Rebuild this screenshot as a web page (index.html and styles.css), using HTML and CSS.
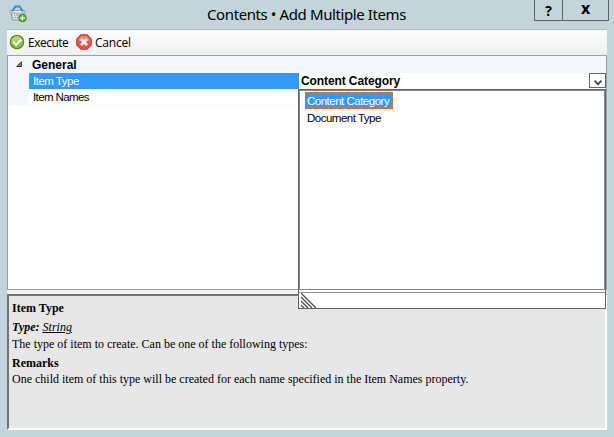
FILE: index.html
```html
<!DOCTYPE html>
<html lang="en">
<head>
<meta charset="utf-8">
<title>Contents • Add Multiple Items</title>
<link rel="stylesheet" href="styles.css">
</head>
<body>
<div class="window">
  <header class="titlebar">
    <svg class="app-icon" width="18" height="18" viewBox="0 0 18 18">
      <path d="M2 7.500h13l-1.500 7.500h-10z" fill="#eceeef" stroke="#899095"/>
      <path d="M3 10h11M3.500 12.500h10M5.500 8.500l1 6M8.500 8.500v6M11.500 8.500l-1 6" stroke="#8b9296" stroke-dasharray="1 1" fill="none"/>
      <path d="M1 5.500h15v2.500H1z" fill="#f3f3f3" stroke="#899095" stroke-width=".8"/>
      <path d="M3 6.500 6.500 1.500h4L14 6.500" fill="none" stroke="#2c91d2" stroke-width="2"/>
      <circle cx="13.500" cy="13" r="3.900" fill="#57a51c" stroke="#3d8a10" stroke-width=".6"/>
      <path d="M13.500 10.500v5M11 13h5" stroke="#fff" stroke-width="1.400"/>
    </svg>
    <h1 class="title">Contents • Add Multiple Items</h1>
    <div class="window-buttons">
      <button class="win-btn help">?</button>
      <button class="win-btn close">x</button>
    </div>
  </header>
  <main class="content">
    <nav class="toolbar">
      <button class="tool">
        <svg width="16" height="16" viewBox="0 0 16 16">
          <circle cx="8" cy="8" r="6.700" fill="#8ebd3c" stroke="#55851b" stroke-width="1.100"/>
          <path d="M2.300 8a5.700 5.700 0 0 1 11.400 0q-5.500-2-11.400 0" fill="#b4d66e"/>
          <path d="m4.200 7.800 2.900 3 4.900-5" fill="none" stroke="#fff" stroke-width="2.200"/>
        </svg>
        <span class="execute-label">Execute</span>
      </button>
      <button class="tool">
        <svg width="16" height="16" viewBox="0 0 16 16">
          <path d="M5 .8h6L15.200 5v6L11 15.200H5L.8 11V5z" fill="#e75849" stroke="#c7352d" stroke-width="1.100"/>
          <path d="M5.300 2h5.400L14 5.300V7Q8 5.500 2 7V5.300z" fill="#f08777"/>
          <path d="m5 5 6 6m0-6-6 6" stroke="#fff" stroke-width="2.500"/>
        </svg>
        <span class="cancel-label">Cancel</span>
      </button>
    </nav>
    <section class="grid">
      <div class="row category">
        <span class="gutter"><svg width="7" height="7" viewBox="0 0 7 7"><path d="M5.500 .8v4.700H.8z" fill="#888" stroke="#333"/></svg></span>
        <span class="category-name">General</span>
      </div>
      <div class="row current">
        <span class="gutter"></span>
        <span class="name selected"><span class="type-label">Item Type</span></span>
        <span class="value">
          <b class="value-label">Content Category</b>
          <button class="drop"><svg width="8" height="6" viewBox="0 0 8 6"><path d="m.5 .7 3.500 3.500L7.500 .7" fill="none" stroke="#4c4c50" stroke-width="2"/></svg></button>
          <div class="popup">
            <ul class="options">
              <li class="option active">Content Category</li>
              <li class="option">Document Type</li>
            </ul>
            <div class="grip"><svg width="15" height="15" viewBox="0 0 15 15"><path d="M0 0l15 15M0 4l11 11M0 8l7 7M0 12l3 3" stroke="#505054" stroke-width="1.300"/></svg></div>
          </div>
        </span>
      </div>
      <div class="row">
        <span class="gutter"></span>
        <span class="name"><span class="names-label">Item Names</span></span>
        <span class="value"></span>
      </div>
    </section>
    <section class="help-pane">
      <p class="help-title"><b>Item Type</b></p>
      <p class="help-kind"><i><b>Type:</b> <u>String</u></i></p>
      <p class="help-text">The type of item to create. Can be one of the following types:</p>
      <p class="help-remarks"><b>Remarks</b></p>
      <p class="help-text">One child item of this type will be created for each name specified in the Item Names property.</p>
    </section>
  </main>
</div>
</body>
</html>
```
FILE: styles.css
```css
* { box-sizing: border-box; }
body { margin: 0; font: 12px "Liberation Sans", Arial, sans-serif; color: #000; }
button { padding: 0; border: 0; background: none; color: inherit; font: inherit; }
svg { display: block; flex: none; }
.window { width: 614px; height: 437px; padding: 0 7px 7px; background: #c3d5da; overflow: hidden; }
.titlebar { display: grid; grid-template-columns: 200px 200px 200px; height: 29px; }
.app-icon { margin: 5px 0 0 2px; }
.title { margin: 3px 0 0; font: 15px/22px "Noto Sans", sans-serif; letter-spacing: -.4px; white-space: nowrap; }
.window-buttons { display: flex; justify-self: end; height: 21px; width: 75px; margin-right: -2px; border: 1px solid #626369; border-top: 0; }
.win-btn { font: bold 14px/19px "Open Sans", sans-serif; height: 20px; }
.help { width: 28px; border-right: 1px solid #626369; }
.close { flex: 1; font-size: 16px; line-height: 17px; padding-bottom: 3px; }
.content { height: 401px; background: #f0f0f0; }
.toolbar { display: flex; gap: 7px; align-items: center; height: 26px; padding: 0 0 1px 2px; border-top: 1px solid #adb9be; background: linear-gradient(#fdfdfd, #f0f0f0); font: 12px "Open Sans", sans-serif; }
.tool { display: flex; align-items: center; gap: 3px; }
.execute-label { width: 41px; letter-spacing: -.5px; text-align: left; }
.cancel-label { letter-spacing: -.2px; }
.grid { height: 235px; border: 1px solid #a0a0a0; background: #fff; }
.row { display: flex; height: 17px; line-height: 16px; }
.current { height: 16px; }
.category, .gutter { background: #f4f7fc; }
.gutter { width: 21px; flex: none; padding: 5px 0 0 8px; }
.category-name { padding-left: 3px; font-weight: bold; line-height: 18px; }
.name { width: 270px; padding-left: 4px; border-bottom: 1px solid #f4f7fc; border-right: 1px solid #f4f7fc; font-size: 11.5px; line-height: 16px; }
.selected { height: 16px; background: #3399ff; color: #fff; border: 0; }
.value { position: relative; flex: 1; display: flex; justify-content: space-between; padding-left: 2px; border-bottom: 1px solid #f4f7fc; }
.value-label { line-height: 17px; letter-spacing: -.1px; }
.type-label { letter-spacing: -.5px; }
.names-label { letter-spacing: -.6px; }
.drop { display: grid; place-items: center; width: 17px; height: 15px; padding-top: 4px; border: 1px solid #626369; background: #fff; }
.popup { position: absolute; z-index: 2; left: -1px; top: 16px; width: 308px; height: 220px; border: 1px solid #626266; background: #fff; }
.options { height: 200px; margin: 0; padding: 1px 0 0 5px; border: 1px solid #85858b; list-style: none; font-size: 11.5px; letter-spacing: -.5px; }
.option { width: 88px; height: 17px; padding-left: 2px; line-height: 18px; white-space: nowrap; }
.active { padding-left: 1px; border: 1px dotted #e67810; background: #3399ff; color: #fff; line-height: 16px; }
.grip { margin-top: 2px; height: 16px; padding-left: 2px; border-top: 1px solid #929296; }
.help-pane { height: 136px; margin-top: 4px; padding: 4px 0 0 3px; border: 2px solid #fff; border-top-color: #73736f; border-left-color: #73736f; background: #e7e7e7; font: 12px/16px "Liberation Serif", serif; }
.help-pane p { margin: 0; white-space: nowrap; }
.help-kind { padding: 3px 0 1px; }
.help-remarks { padding-top: 3px; }
```
